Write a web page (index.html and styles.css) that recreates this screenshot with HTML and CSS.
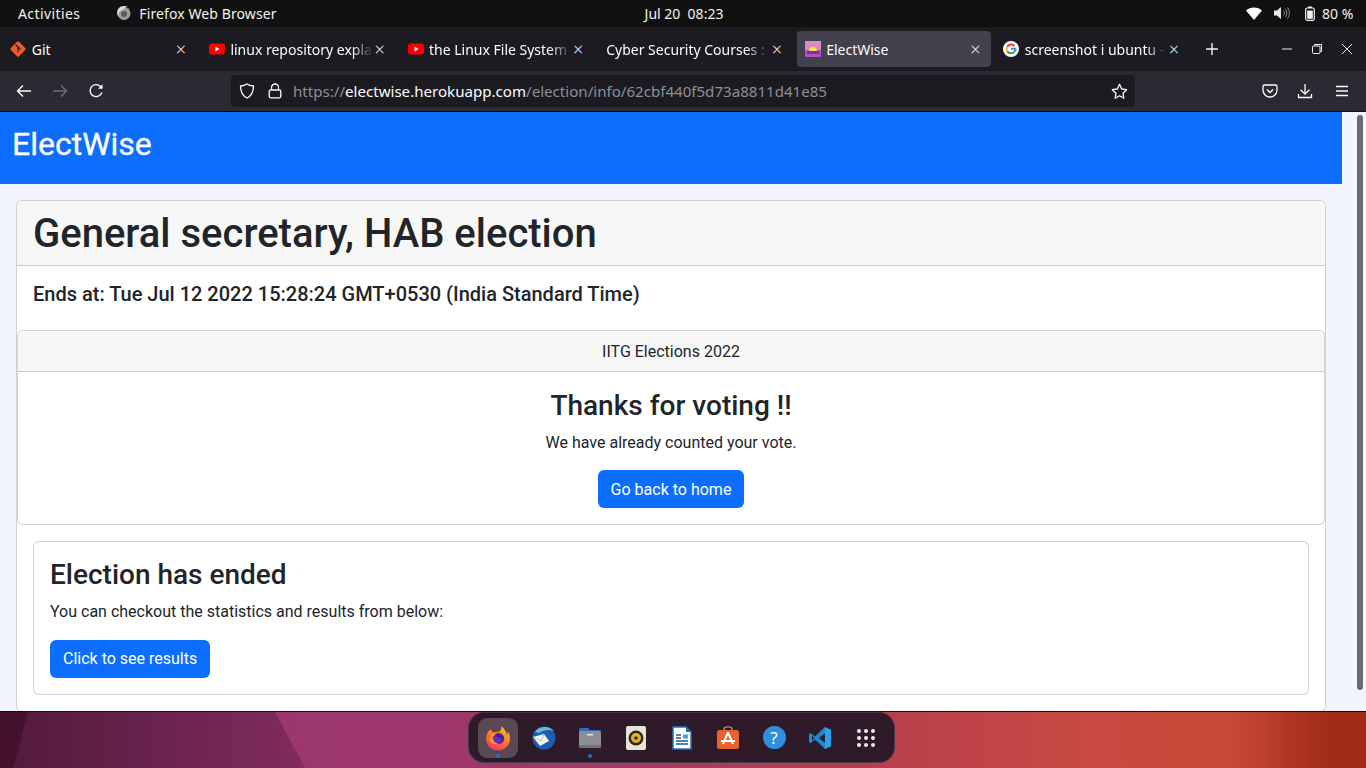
FILE: index.html
```html
<!DOCTYPE html>
<html lang="en">
<head>
    <meta charset="UTF-8">
    <title>ElectWise</title>
    <link rel="stylesheet" href="styles.css">
</head>
<body>

    <!-- Gnome top bar -->
    <div class="topbar">
        <div class="top-left">
            <span class="activities">Activities</span>
            <span class="app-menu">
                <svg width="16" height="16" viewBox="0 0 16 16"><circle cx="8" cy="8.500" r="6.500" fill="#9c9c9c"/><circle cx="8" cy="9" r="3" fill="#5c5c5c"/><path d="M2 4c-1.500 3-1 6 .5 8-.5-3 .5-5.500 3-6.500C7 4 9 3.500 11 1c.5 1.500 2 2.500 3 4.500C13 2.500 11 1 8 1 5.500 1 3.500 2 2 4z" fill="#dcdcdc"/></svg>
                <span class="app-name">Firefox Web Browser</span>
            </span>
        </div>
        <div class="top-clock">Jul 20&nbsp;&nbsp;08:23</div>
        <div class="top-right">
            <svg width="16" height="13" viewBox="0 0 16 13"><path d="M0 3.500C2 1.500 5 .5 8 .5s6 1 8 3l-8 9.500z" fill="#fff"/></svg>
            <svg class="volume" width="16" height="14" viewBox="0 0 16 14"><path d="M0 4.500h3L7 1v12L3 9.500H0z" fill="#e8e8e8"/><path d="M9.500 4.500c1 1.500 1 3.500 0 5M11.500 3c1.800 2.500 1.800 5.500 0 8M13.500 1.500c2.500 3.500 2.500 7.500 0 11" fill="none" stroke="#8a8a8a" stroke-width="1"/></svg>
            <svg class="battery" width="10" height="15" viewBox="0 0 10 15"><path d="M3 .5h4v1.500H3z" fill="#eee"/><rect x=".7" y="2" width="8.600" height="12.300" rx="1.500" fill="none" stroke="#eee" stroke-width="1.200"/><rect x="2.200" y="4.500" width="5.600" height="8.300" fill="#eee"/></svg>
            <span class="battery-text">80 %</span>
        </div>
    </div>

    <!-- Tabs -->
    <div class="tabbar">
        <div class="tab">
            <div class="tab-inner">
                <svg class="favicon" viewBox="0 0 16 16"><rect x="2.200" y="2.200" width="11.600" height="11.600" rx="1.500" transform="rotate(45 8 8)" fill="#ee5a2c"/><path d="M5.500 3.500l5 5M8 6.200v5" stroke="#2b1a18" stroke-width="1.200"/></svg>
                <span class="tab-title">Git</span>
                <span class="tab-close">×</span>
            </div>
        </div>
        <div class="tab">
            <div class="tab-inner">
                <svg class="favicon" viewBox="0 0 16 16"><rect y="2.500" width="16" height="11" rx="3" fill="#f00"/><path d="M6.500 5.500l4 2.500-4 2.500z" fill="#fff"/></svg>
                <span class="tab-title fade">linux repository expla</span>
                <span class="tab-close">×</span>
            </div>
        </div>
        <div class="tab">
            <div class="tab-inner">
                <svg class="favicon" viewBox="0 0 16 16"><rect y="2.500" width="16" height="11" rx="3" fill="#f00"/><path d="M6.500 5.500l4 2.500-4 2.500z" fill="#fff"/></svg>
                <span class="tab-title fade">the Linux File System</span>
                <span class="tab-close">×</span>
            </div>
        </div>
        <div class="tab">
            <div class="tab-inner">
                <span class="tab-title fade">Cyber Security Courses :</span>
                <span class="tab-close">×</span>
            </div>
        </div>
        <div class="tab active">
            <div class="tab-inner">
                <svg class="favicon" viewBox="0 0 16 16"><rect width="16" height="16" rx="1" fill="#b44fc4"/><rect width="16" height="9" fill="#d98cc0"/><path d="M4 10a4 4 0 0 1 8 0z" fill="#f2e33c"/><rect x="2" y="10" width="12" height="3" fill="#7a2f9a"/></svg>
                <span class="tab-title">ElectWise</span>
                <span class="tab-close">×</span>
            </div>
        </div>
        <div class="tab">
            <div class="tab-inner">
                <svg class="favicon" viewBox="0 0 16 16"><circle cx="8" cy="8" r="8" fill="#fff"/><path d="M11.500 5A4.400 4.400 0 0 0 4.300 5.800" fill="none" stroke="#ea4335" stroke-width="2"/><path d="M4.300 5.800a4.400 4.400 0 0 0 0 4.400" fill="none" stroke="#fbbc05" stroke-width="2"/><path d="M4.300 10.200a4.400 4.400 0 0 0 7.500.1" fill="none" stroke="#34a853" stroke-width="2"/><path d="M11.800 10.300c.5-.8.700-1.600.6-2.600H8" fill="none" stroke="#4285f4" stroke-width="2"/></svg>
                <span class="tab-title fade">screenshot i ubuntu -</span>
                <span class="tab-close">×</span>
            </div>
        </div>
        <span class="new-tab">
            <svg width="14" height="14" viewBox="0 0 14 14"><path d="M7 1v12M1 7h12" stroke="#f2f2f2" stroke-width="1.400"/></svg>
        </span>
        <div class="window-btns">
            <svg width="12" height="12" viewBox="0 0 12 12"><path d="M1 6h10" stroke="#eee" stroke-width="1"/></svg>
            <svg width="12" height="12" viewBox="0 0 12 12"><path d="M3.500 2.500V1.500h7v7h-1.500" fill="none" stroke="#eee"/><rect x="1.500" y="3" width="7.500" height="7.500" rx="1" fill="none" stroke="#eee"/></svg>
            <svg width="12" height="12" viewBox="0 0 12 12"><path d="M1 1l10 10M11 1L1 11" stroke="#eee" stroke-width="1"/></svg>
        </div>
    </div>

    <!-- Barra de navegacao -->
    <div class="toolbar">
        <div class="nav-btns">
            <svg width="16" height="16" viewBox="0 0 16 16"><path d="M15 8H1.500M7 2.500L1.500 8 7 13.500" fill="none" stroke="#fbfbfe" stroke-width="1.400"/></svg>
            <svg width="16" height="16" viewBox="0 0 16 16"><path d="M1 8h13.500M9 2.500L14.500 8 9 13.500" fill="none" stroke="#6e6d75" stroke-width="1.400"/></svg>
            <svg width="16" height="16" viewBox="0 0 16 16"><path d="M13.800 9.500A6 6 0 1 1 12.500 3.500L14 5" fill="none" stroke="#fbfbfe" stroke-width="1.400"/><path d="M14.500 1.200v4.600H10z" fill="#fbfbfe"/></svg>
        </div>
        <div class="urlbar">
            <svg width="16" height="16" viewBox="0 0 16 16"><path d="M8 1c2 1.300 4 1.800 6.500 2 0 5.500-1.500 9.500-6.500 12C3 12.500 1.500 8.500 1.500 3 4 2.800 6 2.300 8 1z" fill="none" stroke="#fbfbfe" stroke-width="1.300"/></svg>
            <svg class="lock" width="14" height="16" viewBox="0 0 14 16"><path d="M3.500 7V4.500a3.500 3.500 0 0 1 7 0V7" fill="none" stroke="#fbfbfe" stroke-width="1.300"/><rect x="1.200" y="7" width="11.600" height="7.800" rx="1.500" fill="none" stroke="#fbfbfe" stroke-width="1.300"/></svg>
            <span class="url"><span class="url-dim">https://</span>electwise.herokuapp.com<span class="url-dim">/election/info/62cbf440f5d73a8811d41e85</span></span>
            <svg class="star" width="17" height="17" viewBox="0 0 17 17"><path d="M8.500 1.300l2.200 4.700 5 .7-3.700 3.500.9 5.100-4.400-2.500-4.400 2.500.9-5.100L1.300 6.700l5-.7z" fill="none" stroke="#fbfbfe" stroke-width="1.300" stroke-linejoin="round"/></svg>
        </div>
        <div class="tool-btns">
            <svg width="16" height="16" viewBox="0 0 16 16"><path d="M2.500 2h11A1.500 1.500 0 0 1 15 3.500V7A7 7 0 0 1 1 7V3.500A1.500 1.500 0 0 1 2.500 2z" fill="none" stroke="#fbfbfe" stroke-width="1.300"/><path d="M5 6.500l3 3 3-3" fill="none" stroke="#fbfbfe" stroke-width="1.400"/></svg>
            <svg width="16" height="16" viewBox="0 0 16 16"><path d="M8 1v10M3.500 6.800L8 11.200l4.500-4.400M1.500 11v3.500h13V11" fill="none" stroke="#fbfbfe" stroke-width="1.300"/></svg>
            <svg class="menu-icon" width="12" height="12" viewBox="0 0 12 12"><path d="M0 1.500h12M0 6h12M0 10.500h12" stroke="#fbfbfe" stroke-width="1.400"/></svg>
        </div>
    </div>

    <!-- Pagina -->
    <div class="viewport">
        <div class="page">
            <div class="navbar">
                <a class="navbar-brand">ElectWise</a>
            </div>
            <div class="container">
                <div class="card">
                    <div class="card-header title-header">
                        <h1>General secretary, HAB election</h1>
                    </div>
                    <div class="ends-body">
                        <h5>Ends at: Tue Jul 12 2022 15:28:24 GMT+0530 (India Standard Time)</h5>
                    </div>
                    <div class="card vote-card">
                        <div class="card-header center">IITG Elections 2022</div>
                        <div class="card-body center">
                            <h3>Thanks for voting !!</h3>
                            <p>We have already counted your vote.</p>
                            <a class="btn">Go back to home</a>
                        </div>
                    </div>
                    <div class="card result-card">
                        <div class="card-body">
                            <h3>Election has ended</h3>
                            <p>You can checkout the statistics and results from below:</p>
                            <a class="btn">Click to see results</a>
                        </div>
                    </div>
                </div>
            </div>
        </div>
        <div class="scrollbar"><div class="scroll-thumb"></div></div>
    </div>

    <!-- Area de trabalho e dock -->
    <div class="desktop">
        <svg class="wallpaper" width="1366" height="56" viewBox="0 0 1366 56" preserveAspectRatio="none">
            <defs>
                <linearGradient id="wallA" x1="0" x2="1" y1="0" y2="0">
                    <stop offset="0" stop-color="#511a3c"/>
                    <stop offset="1" stop-color="#812c5c"/>
                </linearGradient>
                <linearGradient id="wallB" gradientUnits="userSpaceOnUse" x1="275" x2="1366" y1="0" y2="0">
                    <stop offset="0" stop-color="#9c3670"/>
                    <stop offset=".3" stop-color="#a03a68"/>
                    <stop offset=".55" stop-color="#b83f4c"/>
                    <stop offset=".75" stop-color="#c84a42"/>
                    <stop offset=".88" stop-color="#c84835"/>
                    <stop offset=".97" stop-color="#9e2a16"/>
                    <stop offset="1" stop-color="#a32b18"/>
                </linearGradient>
            </defs>
            <rect width="1366" height="56" fill="url(#wallB)"/>
            <path d="M0 0H275L305 56H0z" fill="url(#wallA)"/>
            <path d="M0 0H28L13 56H0z" fill="#42122f"/>
        </svg>
        <div class="dock">
            <span class="dock-item running open">
                <svg width="26" height="26" viewBox="0 0 26 26">
                    <defs>
                        <linearGradient id="foxBody" x1=".7" x2=".2" y1="0" y2="1">
                            <stop offset="0" stop-color="#ffc21f"/>
                            <stop offset=".45" stop-color="#ff7a2a"/>
                            <stop offset="1" stop-color="#f0316a"/>
                        </linearGradient>
                    </defs>
                    <path d="M3 7c-1 1.500-2 4-2 6.500a12 12 0 0 0 24 0c0-3-1-5.500-2.500-7.500.3 1.500.1 3-.5 4-.8-3.500-3-6.500-5.500-9 .5 3-1 5-3 6-1.500-.5-3.500-.2-5 .8C7.500 7 6.500 6 6 4.500c-1.500.8-2.500 1.500-3 2.500z" fill="url(#foxBody)"/>
                    <circle cx="13.500" cy="13.500" r="5.800" fill="#6a2dbb"/>
                    <path d="M9 11c3-3 8-2 9.500 1.500.5 3-1.500 6-5 6.500 3-1.500 3.500-4 2.500-5.500-2-1.500-4.500-2-7-2.500z" fill="#3f1f9e"/>
                    <path d="M5 11c1-1.500 3-3 5-3 1 2-1 3-2 3.500-.5 2 0 6 5.500 7.500-6 1.500-10.500-3-8.500-8z" fill="#ff9a26"/>
                </svg>
            </span>
            <span class="dock-item">
                <svg width="26" height="26" viewBox="0 0 26 26"><circle cx="13" cy="13" r="11.500" fill="#1c5fb0"/><path d="M4 7c4-6 14-7 19-1-5-2-11-1-15 2z" fill="#69b5ee"/><path d="M2 12l11-3 5 7-9 5z" fill="#f2f2f2"/><path d="M2 12l8 4 3-7" fill="none" stroke="#b9c0cc" stroke-width="1"/></svg>
            </span>
            <span class="dock-item open">
                <svg width="24" height="24" viewBox="0 0 24 24"><path d="M1 4a2 2 0 0 1 2-2h7l2 2h9a2 2 0 0 1 2 2v3H1z" fill="#2a6fc4"/><rect x="1" y="5" width="22" height="17" rx="2" fill="#8c8f94"/><rect x="1" y="19" width="22" height="3" rx="1" fill="#6f7175"/><rect x="9" y="8" width="6" height="1.500" fill="#e4e4e4"/></svg>
            </span>
            <span class="dock-item">
                <svg width="20" height="24" viewBox="0 0 20 24"><rect width="20" height="24" rx="2" fill="#e8e4d4"/><circle cx="10" cy="12" r="7.500" fill="#2c2a26"/><circle cx="10" cy="12" r="5" fill="#e6b422"/><circle cx="10" cy="12" r="1.800" fill="#2c2a26"/></svg>
            </span>
            <span class="dock-item">
                <svg width="20" height="24" viewBox="0 0 20 24"><path d="M1 1h13l5 5v17H1z" fill="#fff" stroke="#1c74b4" stroke-width="1.500"/><path d="M14 1v5h5z" fill="#1c74b4"/><path d="M4 9h5M4 12h5M4 15h12M4 18h12" stroke="#175c8e" stroke-width="1.300"/><rect x="11" y="8.500" width="5" height="4" fill="#4aa0d8"/></svg>
            </span>
            <span class="dock-item">
                <svg width="24" height="24" viewBox="0 0 24 24"><path d="M8 5V3a2 2 0 0 1 2-2h4a2 2 0 0 1 2 2v2" fill="none" stroke="#c8a890" stroke-width="1.200"/><rect x="1" y="4" width="22" height="19" rx="2.500" fill="#e9622c"/><path d="M12 6.500L7 18M12 6.500L17 18M5 15h14" stroke="#fff" stroke-width="2" fill="none"/></svg>
            </span>
            <span class="dock-item">
                <span class="help-icon">?</span>
            </span>
            <span class="dock-item">
                <svg width="24" height="24" viewBox="0 0 24 24"><path d="M17 1l6 3v16l-6 3-10-9.500L2.500 17 1 16v-8l1.500-1L7 10.500z" fill="#1f88d8"/><path d="M17 7l-6 5 6 5z" fill="#2f2030"/><path d="M4 9.500v5l2.500-2.500z" fill="#2f2030"/><path d="M17 1l6 3v16l-6 3z" fill="#2aa3ee"/></svg>
            </span>
            <span class="dock-item">
                <span class="app-grid">
                    <i></i><i></i><i></i><i></i><i></i><i></i><i></i><i></i><i></i>
                </span>
            </span>
        </div>
    </div>

</body>
</html>
```

FILE: styles.css
```css
* {
    box-sizing: border-box;
}

body {
    margin: 0;
    width: 1366px;
    height: 768px;
    overflow: hidden;
    display: flex;
    flex-direction: column;
    font-family: 'Roboto', 'Liberation Sans', sans-serif;
    background: #111;
}

svg {
    display: block;
    flex: none;
}

/* Top bar */
.topbar {
    height: 27px;
    background: #111111;
    color: #f2f2f2;
    font-family: 'Noto Sans', sans-serif;
    font-size: 14px;
    display: grid;
    grid-template-columns: 1fr auto 1fr;
    align-items: center;
    padding: 0 11px 1px 18px;
}

.activities {
    letter-spacing: .4px;
}

.top-left {
    display: flex;
    align-items: center;
    gap: 36px;
}

.app-menu {
    display: flex;
    align-items: center;
    gap: 7px;
}

.app-name {
    letter-spacing: .1px;
}

.top-clock {
    margin-right: 5px;
}

.top-right {
    display: flex;
    align-items: center;
    justify-content: flex-end;
}

.volume {
    margin-left: 12px;
}

.battery {
    margin-left: 15px;
}

.battery-text {
    margin-left: 7px;
    width: 33px;
}

/* Tabs */
.tabbar {
    height: 44px;
    background: #1c1b22;
    color: #fbfbfe;
    font-family: 'Noto Sans', sans-serif;
    font-size: 14px;
    display: flex;
    align-items: center;
    padding-left: .4px;
}

.tab {
    width: 198.6px;
    padding: 0 2px;
    flex: none;
}

.tab-inner {
    height: 36px;
    display: flex;
    align-items: center;
    padding: 0 9px 0 8px;
    border-radius: 4px;
}

.tab.active .tab-inner {
    background: #42414d;
}

.favicon {
    width: 16px;
    height: 16px;
    margin-right: 5.4px;
}

.tab-title {
    flex: 1;
    min-width: 0;
    white-space: nowrap;
}

.tab-title.fade {
    -webkit-mask-image: linear-gradient(to right, #000 85%, transparent 100%);
    mask-image: linear-gradient(to right, #000 85%, transparent 100%);
}

.tab-close {
    width: 14px;
    text-align: center;
    font-size: 18px;
    line-height: 18px;
    font-weight: 300;
    color: #e6e6e6;
}

.new-tab {
    margin-left: 13.5px;
}

.window-btns {
    margin-left: auto;
    margin-right: 13px;
    display: flex;
    gap: 18px;
}

/* Barra de navegacao */
.toolbar {
    height: 41px;
    background: #2b2a33;
    border-bottom: 1px solid #0c0c0d;
    display: flex;
    align-items: center;
}

.nav-btns {
    display: flex;
    gap: 20px;
    padding-left: 16px;
    width: 231px;
}

.urlbar {
    width: 904px;
    height: 32px;
    background: #1c1b22;
    border-radius: 4px;
    display: flex;
    align-items: center;
    padding: 0 7px 0 8px;
}

.lock {
    margin-left: 13px;
}

.url {
    margin-left: 11px;
    flex: 1;
    font-family: 'Noto Sans', sans-serif;
    font-size: 15.1px;
    color: #fbfbfe;
    white-space: nowrap;
}

.url-dim {
    color: #8f8f94;
}

.tool-btns {
    display: flex;
    align-items: center;
    gap: 19px;
    padding-left: 127px;
}

.menu-icon {
    margin-left: 4px;
}

/* Pagina */
.viewport {
    height: 599px;
    flex: none;
    display: flex;
    background: #f2f5fe;
    overflow: hidden;
}

.page {
    width: 1342px;
    flex: none;
}

.navbar {
    height: 72px;
    background: #0d6efd;
    padding: 8px 12px 0;
}

.navbar-brand {
    color: #fff;
    font-size: 32px;
    line-height: 48px;
    font-weight: 400;
    -webkit-text-stroke: .3px #fff;
}

.container {
    padding: 16.4px 16px 0;
}

.card {
    background: #fff;
    border: 1px solid rgba(0, 0, 0, .175);
    border-radius: 6px;
}

.card-header {
    background: #f7f7f7;
    border-bottom: 1px solid rgba(0, 0, 0, .175);
    padding: 9px 16px 7px;
    font-size: 16px;
    line-height: 24px;
    color: #212529;
    border-radius: 5px 5px 0 0;
}

.card-body {
    padding: 16px;
}

.center {
    text-align: center;
}

h1 {
    margin: 0;
    font-size: 40px;
    line-height: 48px;
    font-weight: 500;
    color: #212529;
}

h3 {
    margin: 0 0 8px;
    font-size: 28px;
    line-height: 33.6px;
    font-weight: 500;
    color: #212529;
}

h5 {
    margin: 0;
    font-size: 20px;
    line-height: 24px;
    font-weight: 500;
    color: #212529;
}

p {
    margin: 0 0 16px;
    font-size: 16px;
    line-height: 24px;
    color: #212529;
}

.ends-body {
    padding: 16px 16px 24px;
}

.vote-card {
    margin: 0;
}

.vote-card .card-body {
    padding-top: 17px;
}

.vote-card p {
    margin-bottom: 15px;
}

.vote-card .btn {
    padding: 8px 13px 6px;
}

.result-card {
    margin: 16px;
}

.btn {
    display: inline-block;
    background: #0d6efd;
    color: #fff;
    font-size: 16px;
    line-height: 24px;
    padding: 7px 13px;
    border-radius: 6px;
}

.scrollbar {
    width: 24px;
    padding: 3px 0 0 15px;
}

.scroll-thumb {
    width: 6px;
    height: 575px;
    border-radius: 3px;
    background: #6b6b6b;
}

/* Area de trabalho */
.desktop {
    height: 57px;
    flex: none;
    position: relative;
    border-top: 1px solid #111;
    padding-left: 468px;
}

.wallpaper {
    position: absolute;
    left: 0;
    top: 0;
}

.dock {
    position: relative;
    width: 427px;
    height: 51px;
    background: #2f1a2a;
    border: 1px solid #4a3a46;
    border-top-color: #47303f;
    border-radius: 16px;
    display: flex;
    align-items: center;
    padding-left: 9px;
    gap: 6px;
}

.dock-item {
    width: 40px;
    height: 40px;
    border-radius: 9px;
    display: flex;
    align-items: center;
    justify-content: center;
    position: relative;
}

.dock-item.running {
    background: #5a4854;
}

.dock-item.open::after {
    content: "";
    position: absolute;
    left: 18px;
    bottom: 0;
    width: 4px;
    height: 4px;
    border-radius: 50%;
    background: #1a6fd8;
}

.help-icon {
    width: 23px;
    height: 23px;
    border-radius: 50%;
    background: #2e8fdc;
    color: #fff;
    font-family: 'Noto Sans', sans-serif;
    font-size: 17px;
    line-height: 23px;
    text-align: center;
}

.app-grid {
    display: grid;
    grid-template-columns: repeat(3, 4px);
    gap: 3px;
}

.app-grid i {
    width: 4px;
    height: 4px;
    border-radius: 50%;
    background: #eee;
}
```
